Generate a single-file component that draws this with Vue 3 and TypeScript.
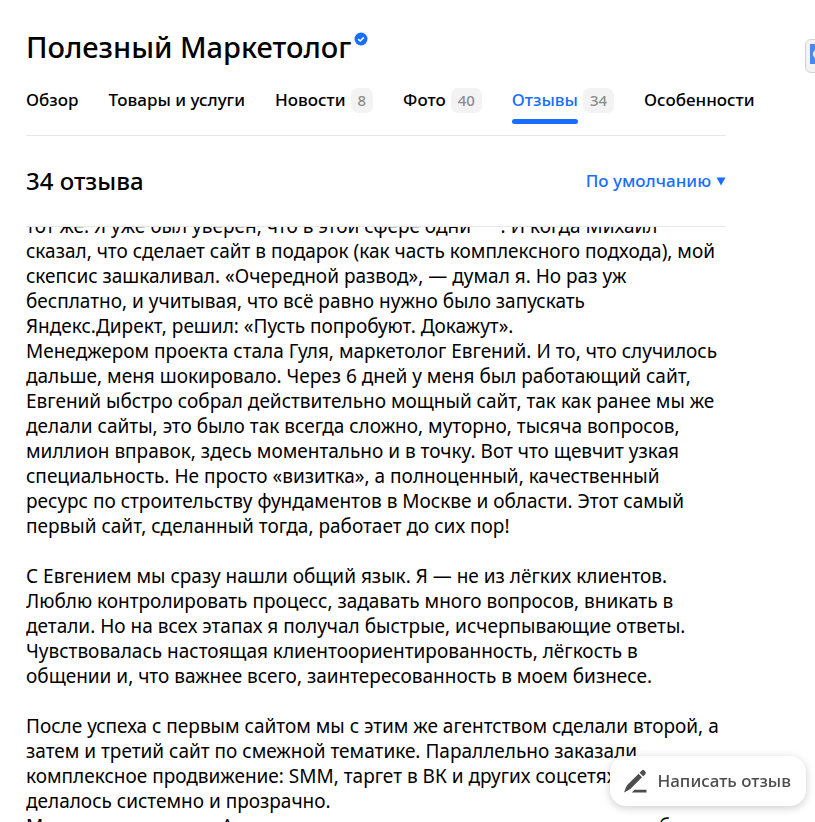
<script setup lang="ts">
interface Tab {
  title: string
  count?: number
  active?: boolean
}

const tabs: Tab[] = [
  { title: 'Обзор' },
  { title: 'Товары и услуги' },
  { title: 'Новости', count: 8 },
  { title: 'Фото', count: 40 },
  { title: 'Отзывы', count: 34, active: true },
  { title: 'Особенности' },
]

const review = `тот же. Я уже был уверен, что в этой сфере одни      . И когда Михаил
сказал, что сделает сайт в подарок (как часть комплексного подхода), мой
скепсис зашкаливал. «Очередной развод», — думал я. Но раз уж
бесплатно, и учитывая, что всё равно нужно было запускать
Яндекс.Директ, решил: «Пусть попробуют. Докажут».
Менеджером проекта стала Гуля, маркетолог Евгений. И то, что случилось
дальше, меня шокировало. Через 6 дней у меня был работающий сайт,
Евгений ыбстро собрал действительно мощный сайт, так как ранее мы же
делали сайты, это было так всегда сложно, муторно, тысяча вопросов,
миллион вправок, здесь моментально и в точку. Вот что щевчит узкая
специальность. Не просто «визитка», а полноценный, качественный
ресурс по строительству фундаментов в Москве и области. Этот самый
первый сайт, сделанный тогда, работает до сих пор!

С Евгением мы сразу нашли общий язык. Я — не из лёгких клиентов.
Люблю контролировать процесс, задавать много вопросов, вникать в
детали. Но на всех этапах я получал быстрые, исчерпывающие ответы.
Чувствовалась настоящая клиентоориентированность, лёгкость в
общении и, что важнее всего, заинтересованность в моем бизнесе.

После успеха с первым сайтом мы с этим же агентством сделали второй, а
затем и третий сайт по смежной тематике. Параллельно заказали
комплексное продвижение: SMM, таргет в ВК и других соцсетях. Всё
делалось системно и прозрачно.
Мы видели отличия. Агентство постоянно на связи, держит в курсе, без`
</script>

<template>
  <main class="page">
    <header class="head">
      <h1 class="title">
        Полезный Маркетолог
        <svg class="verified" viewBox="0 0 14 14" aria-hidden="true">
          <circle cx="7" cy="7" r="6.5" fill="#196dff" />
          <path d="M4.2 7.1 6.2 9l3.6-3.6" fill="none" stroke="#fff" stroke-width="1.5" />
        </svg>
      </h1>
      <nav class="tabs">
        <a v-for="tab in tabs" :key="tab.title" href="#" class="tab" :class="{ active: tab.active }">
          <span class="label">{{ tab.title }}</span>
          <span v-if="tab.count" class="count">{{ tab.count }}</span>
        </a>
      </nav>
    </header>

    <section class="reviews">
      <div class="bar">
        <h2 class="total">34 отзыва</h2>
        <button type="button" class="sort">
          По умолчанию
          <svg class="arrow" viewBox="0 0 10 9" aria-hidden="true">
            <path d="M0.5 0.5h9L5 8.5z" fill="#196dff" />
          </svg>
        </button>
      </div>
      <div class="scroller">
        <p class="text">{{ review }}</p>
      </div>
    </section>

    <button type="button" class="write">
      <svg class="pen" viewBox="0 0 24 24" aria-hidden="true">
        <g fill="#4d4d4d">
          <path d="M1 23.4 3 18.2Q3.6 16.6 5 15.2L15.6 4.8l3.4 3.4L8.6 18.8Q7.3 20.2 5.8 21z" />
          <path d="m16.6 3.8 1.7-1.9a2.7 2.7 0 0 1 3.9 3.7l-2 1.7z" />
          <path d="M11.5 20.7H23.5V23.4H8.8z" />
        </g>
      </svg>
      Написать отзыв
    </button>

    <button type="button" class="side" aria-label="Перевести">
      <svg class="side-icon" viewBox="0 0 20 20" aria-hidden="true">
        <path d="M0 0h20v20H0z" fill="#4a87ee" />
        <path d="M7.500 6.500a3.500 3.500 0 1 0 0 7" fill="none" stroke="#dfe9fc" stroke-width="2.500" />
      </svg>
    </button>
  </main>
</template>

<style>
body {
  background: #fff;
  overflow: hidden;
}
</style>

<style scoped>
.page {
  display: flex;
  flex-direction: column;
  height: 100vh;
  box-sizing: border-box;
  padding: 27px 89px 0 26px;
  font-family: "Noto Sans", "Open Sans", sans-serif;
  color: #000;
}

.head {
  border-bottom: 1px solid #e7e7e7;
}

.title {
  display: flex;
  gap: 3px;
  margin: 0;
  font-size: 29px;
  line-height: 40px;
  font-weight: 500;
  white-space: nowrap;
}

.verified {
  width: 14px;
  height: 14px;
  margin-top: 5px;
}

.tabs {
  display: flex;
  gap: 30px;
  margin-top: 17px;
  height: 51px;
  white-space: nowrap;
}

.tab {
  display: flex;
  align-items: flex-start;
  gap: 5px;
  color: #000;
  font-size: 17px;
  line-height: 32px;
  font-weight: 500;
  text-decoration: none;
}

.active {
  color: #196dff;
}

.active .label::after {
  content: "";
  display: block;
  height: 5px;
  margin-top: 3px;
  border-radius: 3px;
  background: #196dff;
}

.count {
  margin-top: 4px;
  padding: 0 7px;
  border-radius: 7px;
  background: #f3f3f3;
  color: #8c8c8c;
  font-size: 15px;
  line-height: 25px;
}

.reviews {
  display: flex;
  flex-direction: column;
  flex: 1;
  min-height: 0;
}

.bar {
  display: flex;
  align-items: center;
  justify-content: space-between;
  height: 90px;
  flex-shrink: 0;
  border-bottom: 1px solid #e7e7e7;
}

.total {
  margin: 0;
  font-size: 24px;
  line-height: 32px;
  font-weight: 500;
}

.sort {
  display: flex;
  align-items: center;
  gap: 5px;
  padding: 0;
  border: 0;
  background: none;
  color: #196dff;
  font: 500 17px/24px "Noto Sans", "Open Sans", sans-serif;
}

.arrow {
  width: 10px;
  height: 9px;
}

.scroller {
  flex: 1;
  min-height: 0;
  overflow: hidden;
}

.text {
  margin: -13px 0 0;
  font-size: 19px;
  line-height: 25px;
  white-space: pre;
}

.write {
  position: fixed;
  right: 9px;
  bottom: 16px;
  display: flex;
  align-items: center;
  gap: 10px;
  height: 50px;
  padding: 0 15px 0 13px;
  border: 0;
  border-radius: 16px;
  background: #fff;
  box-shadow: 0 2px 8px rgba(0, 0, 0, 0.2);
  color: #4d4d4d;
  font: 500 17px/24px "Noto Sans", "Open Sans", sans-serif;
  white-space: nowrap;
}

.pen {
  width: 24px;
  height: 24px;
}

.side {
  position: fixed;
  top: 39px;
  right: -24px;
  display: flex;
  width: 34px;
  height: 34px;
  padding: 4px;
  border: 1px solid #d2d2d2;
  border-radius: 6px;
  background: #f3f3f3;
}

.side-icon {
  width: 20px;
  height: 20px;
}
</style>
